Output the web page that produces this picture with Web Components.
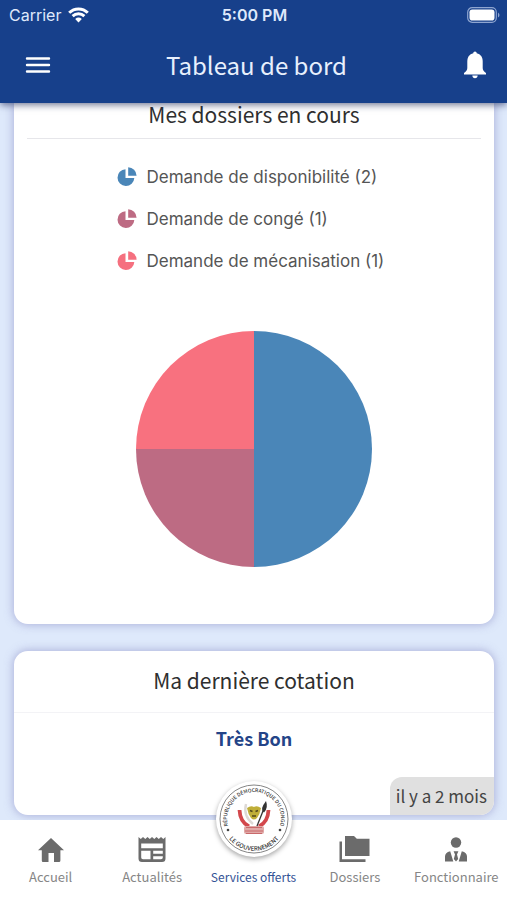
<!DOCTYPE html>
<html lang="fr">
<head>
<meta charset="utf-8">
<meta name="viewport" content="width=device-width, initial-scale=1">
<title>Tableau de bord</title>
<style>
:root{--blue:#17408b;--humanist:"Noto Sans CJK SC","Open Sans",sans-serif;--ui:Inter,"Liberation Sans",sans-serif}
body{margin:0;font-family:var(--humanist)}
</style>
</head>
<body>
<dash-app></dash-app>
<script>
const define = (name, html, setup) => {
  const tpl = document.createElement('template');
  tpl.innerHTML = html;
  customElements.define(name, class extends HTMLElement {
    constructor() {
      super();
      this.attachShadow({mode: 'open'}).append(tpl.content.cloneNode(true));
    }
    connectedCallback() { if (setup) setup(this, this.shadowRoot); }
  });
};

define('status-bar', `
<style>
:host{display:grid;grid-template-columns:1fr auto 1fr;align-items:center;height:30px;padding:0 7px 0 9px;font:400 16px/20px var(--ui);color:#dfe9fb}
.net{display:flex;align-items:center;gap:7px}
.time{font-weight:600}
.bat{justify-self:end}
svg{display:block}
</style>
<span class="net"><span>Carrier</span>
<svg width="21" height="16" viewBox="0 0 21 16" fill="none" stroke="#fff" stroke-width="3"><path d="M1.2 5.7C6.4.6 14.6.6 19.8 5.7"/><path d="M4.600 9.200C8 6 13 6 16.400 9.200"/><path d="M10.500 15.400 7.200 12Q10.500 9.200 13.800 12Z" fill="#fff" stroke="none"/></svg></span>
<span class="time">5:00 PM</span>
<svg class="bat" width="33" height="16" viewBox="0 0 33 16"><rect x=".7" y=".7" width="28.600" height="14.600" rx="4.500" fill="none" stroke="#8ea5d0" stroke-width="1.200"/><rect x="2.500" y="2.500" width="25" height="11" rx="2.800" fill="#fff"/><path d="M31 5.500q1.500 1 1.500 2.500T31 10.500z" fill="#8ea5d0"/></svg>`);

define('app-bar', `
<style>
:host{display:block;position:relative;z-index:2;flex:none;background:var(--blue);box-shadow:0 2px 7px rgba(20,30,80,.6);color:#e8f0fd}
.bar{display:grid;grid-template-columns:48px 1fr 48px;align-items:center;height:70px;padding:0 8px 3px 14px}
h1{margin:0;text-align:center;font:400 24px/32px var(--humanist)}
button{display:grid;place-items:center;height:48px;padding:0;border:0;background:none;color:#fff}
svg{display:block}
</style>
<status-bar></status-bar>
<div class="bar">
<button aria-label="Menu"><svg width="26" height="18" viewBox="0 0 26 18" stroke="currentColor" stroke-width="2.400" stroke-linecap="round"><path d="M2 2.500h22M2 9h22M2 15.500h22"/></svg></button>
<h1><slot></slot></h1>
<button aria-label="Notifications"><svg width="24" height="28" viewBox="0 0 24 28" fill="currentColor"><path d="M12 0.500c1 0 1.700.8 1.700 1.800 4 .9 6 4 6 8.200v6.500c0 2 .8 3.200 3.300 4.900v1.600H1v-1.600c2.500-1.700 3.300-2.900 3.300-4.900v-6.500c0-4.200 2-7.300 6-8.200 0-1 .7-1.800 1.700-1.800zM9.300 24.600h5.400c0 1.600-1.200 2.700-2.700 2.700s-2.700-1.100-2.700-2.700z"/></svg></button>
</div>`);

define('dash-card', `
<style>
:host{display:block;background:#fff;border-radius:14px;box-shadow:0 0 9px 1px rgba(125,125,190,.5)}
:host([continued]){border-radius:0 0 14px 14px}
h2{margin:0;padding:13px 0 16px;text-align:center;font:400 21px/32px var(--humanist);color:#2f2f2f;border-bottom:1px solid #f3f3f6}
:host([continued]) h2{margin:0 13px;padding:0 0 13px;line-height:22px;border-color:#e6e6ea}
</style>
<h2><slot name="title"></slot></h2><slot></slot>`);

define('legend-item', `
<style>
:host{display:flex;align-items:center;gap:10px;height:42px;font:400 17px/24px var(--ui);color:#555}
svg{display:block;flex:none;fill:var(--tint)}
</style>
<svg width="20" height="20" viewBox="0 0 20 20"><path d="M8.500 2.200V11H17.300A8.400 8.400 0 1 1 8.500 2.200z"/><path d="M11.200.3A8.600 8.600 0 0 1 19.600 8.700H11.200z"/></svg><span><slot></slot></span>`);

define('pie-chart', `
<style>:host{display:flex;justify-content:center}svg{display:block;width:236px;height:236px}</style>
<svg viewBox="-118 -118 236 236" role="img" aria-label="Répartition des dossiers"></svg>`, (el, root) => {
  const parts = JSON.parse(el.getAttribute('values'));
  const total = parts.reduce((s, p) => s + p[0], 0);
  let a = -Math.PI / 2, out = '';
  for (const [n, color] of parts) {
    const b = a + n / total * 2 * Math.PI, r = 118;
    out += `<path fill="${color}" d="M0 0L${r*Math.cos(a)} ${r*Math.sin(a)}A${r} ${r} 0 0 1 ${r*Math.cos(b)} ${r*Math.sin(b)}Z"/>`;
    a = b;
  }
  root.querySelector('svg').innerHTML = out;
});

define('gov-seal', `
<style>
:host{display:block;border-radius:50%;background:#fff;box-shadow:0 2px 5px rgba(0,0,0,.35)}
svg{display:block}text{font:500 5px var(--humanist);fill:#333}.low{font-size:6px}
</style>
<svg width="76" height="76" viewBox="-38 -38 76 76">
<defs><path id="top" d="M-23.400 13.500A27 27 0 1 1 23.400 13.500"/><path id="bot" d="M-30.500 9A31.800 31.800 0 0 0 30.500 9"/></defs>
<circle r="34" fill="#fff" stroke="#777" stroke-width=".9"/>
<text text-anchor="middle"><textPath href="#top" startOffset="50%">RÉPUBLIQUE DÉMOCRATIQUE DU CONGO</textPath></text>
<text class="low" text-anchor="middle"><textPath href="#bot" startOffset="50%">LE GOUVERNEMENT</textPath></text>
<circle cx="-26" cy="11" r="1.300" fill="#444"/><circle cx="26" cy="11" r="1.300" fill="#444"/>
<path d="M-14.500-9Q-14 3-5 7.500" fill="none" stroke="#d3474c" stroke-width="3.800"/>
<path d="M14.500-9Q14 3 5 7.500" fill="none" stroke="#d3474c" stroke-width="3.800"/>
<path d="M-8-15Q-11-3-1 5" fill="none" stroke="#ddd9d6" stroke-width="2.400"/>
<rect x="-10" y="7" width="20" height="8" rx="2" fill="#e0a9a7"/><path d="M-8 8.500H8M-9 12H9M-8 14.500H8" stroke="#c9696b" stroke-width="1"/>
<path d="M-7-11Q-3-14 0-12Q3-14 7-11Q6-5 3-1Q0 2-3-1Q-6-5-7-11z" fill="#bfae38"/><path d="M-4-8.500l2.500 1M4-8.500l-2.500 1M-2-3h4" stroke="#53481b" stroke-width="1.500"/>
<path d="M3 7 9-8" stroke="#333" stroke-width="1.300"/><path d="M12-18Q14.500-11 10-6.500Q5-9 12-18z" fill="#333"/>
</svg>`);

define('nav-item', `
<style>
:host{display:block;flex:1 1 0;min-width:0}
a{display:flex;flex-direction:column;align-items:center;justify-content:flex-end;height:100%;box-sizing:border-box;padding:0 0 13px;gap:5px;font:400 13px/20px var(--humanist);color:#868686;text-decoration:none;white-space:nowrap}
:host([active]) a{font-size:12px;color:#345396}
::slotted(svg){display:block;fill:#6b6b6b}
</style>
<a href="#"><slot name="icon"></slot><span><slot></slot></span></a>`);

define('nav-bar', `
<style>
:host{display:flex;position:relative;z-index:2;flex:none;height:80px;background:#fff}
gov-seal{position:absolute;left:50%;top:-39px;transform:translateX(-50%)}
</style>
<nav-item><svg slot="icon" width="26" height="24" viewBox="0 0 26 24"><path d="M13 0 26 12.200H22.400V22.500Q22.400 24 21 24H16V15H10.500V24H5Q3.800 24 3.800 22.500V12.200H0z"/></svg>Accueil</nav-item>
<nav-item><svg slot="icon" width="28" height="25" viewBox="0 0 28 25"><path fill-rule="evenodd" d="M.5 0 2.800 2 5 0 7.300 2 9.500 0 11.800 2 14 0 16.300 2 18.500 0 20.800 2 23 0 25.300 2 27.500 0V21.500Q27.500 25 24 25H4Q.5 25 .5 21.500zM3.200 6.500V11.300H24.800V6.500zM3.200 13.700V20.500Q3.200 22.300 5 22.300H12.500V13.700zM15.200 13.700V16.700H24.800V13.700zM15.200 19.200V22.300H23Q24.800 22.300 24.800 20.500V19.200z"/></svg>Actualités</nav-item>
<nav-item active>Services offerts</nav-item>
<nav-item><svg slot="icon" width="31" height="26" viewBox="0 0 31 26"><path d="M6 0H15L17.800 2.700H30.500V20H6z"/><path d="M.5 5.500H3V23.300H26.500V26H.5z"/></svg>Dossiers</nav-item>
<nav-item><svg slot="icon" width="22" height="25" viewBox="0 0 22 25"><circle cx="11" cy="5.500" r="5.200"/><path d="M0 24.500V19.500Q0 15.500 5.200 14.200L8.300 24.500zM22 24.500V19.500Q22 15.500 16.800 14.200L13.700 24.500zM8.600 14.200H13.400L12 17.500 13.200 22 11 24.500 8.800 22 10 17.500z"/></svg>Fonctionnaire</nav-item>
<gov-seal></gov-seal>`);

define('dash-app', `
<style>
:host{display:flex;flex-direction:column;height:100vh;overflow:hidden;background:#dee9fb}
main{flex:1;min-height:0;display:flex;flex-direction:column;gap:27px;padding:0 13px 0 14px}
dash-card{flex:none}
.legend{display:grid;width:max-content;min-width:275px;margin:17px auto 49px}
pie-chart{margin-bottom:57px}
.grade{margin:0;padding:12px 0;text-align:center;font:700 18px/26px var(--humanist);color:#244488}
.when{display:block;width:max-content;margin:14px 0 0 auto;padding:6px 7px 6px 6px;border-radius:12px 0 14px 0;background:#e0e0e0;font:400 17px/26px var(--humanist);color:#444}
</style>
<app-bar>Tableau de bord</app-bar>
<main>
<dash-card continued><span slot="title">Mes dossiers en cours</span>
<div class="legend">
<legend-item style="--tint:#4a86b8">Demande de disponibilité (2)</legend-item>
<legend-item style="--tint:#bd6b83">Demande de congé (1)</legend-item>
<legend-item style="--tint:#f5707f">Demande de mécanisation (1)</legend-item>
</div>
<pie-chart values='[[2,"#4a86b8"],[1,"#bd6b83"],[1,"#f8717f"]]'></pie-chart>
</dash-card>
<dash-card><span slot="title">Ma dernière cotation</span>
<p class="grade">Très Bon</p>
<time class="when">il y a 2 mois</time>
</dash-card>
</main>
<nav-bar></nav-bar>`);
</script>
</body>
</html>
